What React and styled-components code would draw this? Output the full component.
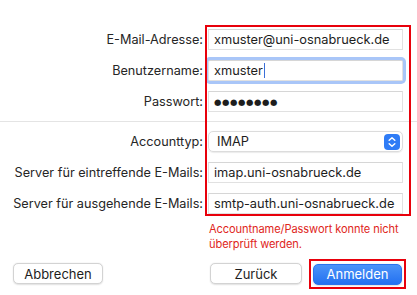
import React from "react";
import styled, { createGlobalStyle } from "styled-components";

const Global = createGlobalStyle`
  html, body { margin: 0; padding: 0; background: #ffffff; }
  body { font-family: Inter, "Noto Sans", "Liberation Sans", sans-serif; color: #222; -webkit-font-smoothing: antialiased; }
`;

const Page = styled.div`
  position: relative;
  width: 417px;
  height: 295px;
  padding-top: 24px;
  box-sizing: border-box;
  overflow: hidden;
`;

const Grid = styled.div`
  display: grid;
  grid-template-columns: 203px 195px;
  column-gap: 5px;
  grid-auto-rows: 31px;
  align-items: center;
`;

const Label = styled.div`
  text-align: right;
  font-size: 12.7px;
  color: #262626;
  white-space: nowrap;
`;

const Field = styled.div`
  height: 21px;
  box-sizing: border-box;
  border: 1px solid #e1e1e1;
  border-top-color: #d6d6d6;
  background: #fff;
  display: flex;
  align-items: center;
  padding-left: 5px;
  font-size: 12.8px;
  color: #1d1d1d;
  white-space: nowrap;
  box-shadow: ${(p) => (p.$focused ? "0 0 0 3px #a9c6f8" : "none")};
  border-radius: ${(p) => (p.$focused ? "2px" : "0")};
`;

const Caret = styled.span`
  display: inline-block;
  width: 1px;
  height: 15px;
  background: #3a6fd8;
  margin-left: 1px;
`;

const Dots = styled.span`
  font-family: "DejaVu Sans", sans-serif;
  font-size: 8.5px;
  letter-spacing: 0.6px;
  color: #1d1d1d;
`;

const Separator = styled.div`
  height: 1px;
  background: #e4e4e4;
  margin: 4px 0 4px;
`;

const Popup = styled.div`
  height: 21px;
  box-sizing: border-box;
  border: 1px solid #dcdcdc;
  border-radius: 5px;
  box-shadow: 0 0.5px 1px rgba(0, 0, 0, 0.08);
  display: flex;
  align-items: center;
  justify-content: space-between;
  padding: 0 2px 0 8px;
  font-size: 12.8px;
  color: #1d1d1d;
`;

const Stepper = styled.svg`
  width: 16px;
  height: 16px;
  display: block;
`;

const ErrorText = styled.div`
  margin: 3px 0 0 209px;
  font-size: 11.1px;
  letter-spacing: -0.1px;
  line-height: 15px;
  color: #e0261c;
  white-space: nowrap;
`;

const ButtonRow = styled.div`
  display: flex;
  justify-content: space-between;
  align-items: center;
  padding: 7px 11px 0 13px;
`;

const Group = styled.div`
  display: flex;
  align-items: center;
  gap: 7px;
`;

const Button = styled.button`
  width: ${(p) => p.$w}px;
  height: 21px;
  box-sizing: border-box;
  border: 1px solid #d3d3d3;
  border-radius: 5px;
  background: ${(p) => (p.$primary ? "linear-gradient(#4b93f8, #2371f1)" : "#ffffff")};
  border-color: ${(p) => (p.$primary ? "#2a73ee" : "#d3d3d3")};
  color: ${(p) => (p.$primary ? "#ffffff" : "#1d1d1d")};
  font-family: Inter, "Noto Sans", sans-serif;
  font-size: 13px;
  padding: 0;
  box-shadow: 0 0.5px 1.5px rgba(0, 0, 0, 0.12);
`;

const Highlight = styled.div`
  padding: 2px;
  border: 2px solid #e8000b;
`;

const RedBox = styled.div`
  position: absolute;
  left: 205px;
  top: 25px;
  width: 206px;
  height: 191px;
  box-sizing: border-box;
  border: 2px solid #e8000b;
  pointer-events: none;
`;

export default function App() {
  return (
    <Page>
      <Global />
      <Grid>
        <Label>E-Mail-Adresse:</Label>
        <Field>xmuster@uni-osnabrueck.de</Field>
        <Label>Benutzername:</Label>
        <Field $focused>
          xmuster
          <Caret />
        </Field>
        <Label>Passwort:</Label>
        <Field>
          <Dots>●●●●●●●●</Dots>
        </Field>
      </Grid>
      <Separator />
      <Grid>
        <Label>Accounttyp:</Label>
        <Popup>
          IMAP
          <Stepper viewBox="0 0 16 16">
            <rect x="0" y="0" width="16" height="16" rx="4" fill="#2f7cf6" />
            <path d="M5.2 6.3 L8 3.8 L10.8 6.3" stroke="#fff" strokeWidth="1.5" fill="none" strokeLinecap="round" strokeLinejoin="round" />
            <path d="M5.2 9.7 L8 12.2 L10.8 9.7" stroke="#fff" strokeWidth="1.5" fill="none" strokeLinecap="round" strokeLinejoin="round" />
          </Stepper>
        </Popup>
        <Label>Server für eintreffende E-Mails:</Label>
        <Field>imap.uni-osnabrueck.de</Field>
        <Label>Server für ausgehende E-Mails:</Label>
        <Field>smtp-auth.uni-osnabrueck.de</Field>
      </Grid>
      <ErrorText>
        Accountname/Passwort konnte nicht
        <br />
        überprüft werden.
      </ErrorText>
      <ButtonRow>
        <Button $w={90}>Abbrechen</Button>
        <Group>
          <Button $w={92}>Zurück</Button>
          <Highlight>
            <Button $w={89} $primary>
              Anmelden
            </Button>
          </Highlight>
        </Group>
      </ButtonRow>
      <RedBox />
    </Page>
  );
}
